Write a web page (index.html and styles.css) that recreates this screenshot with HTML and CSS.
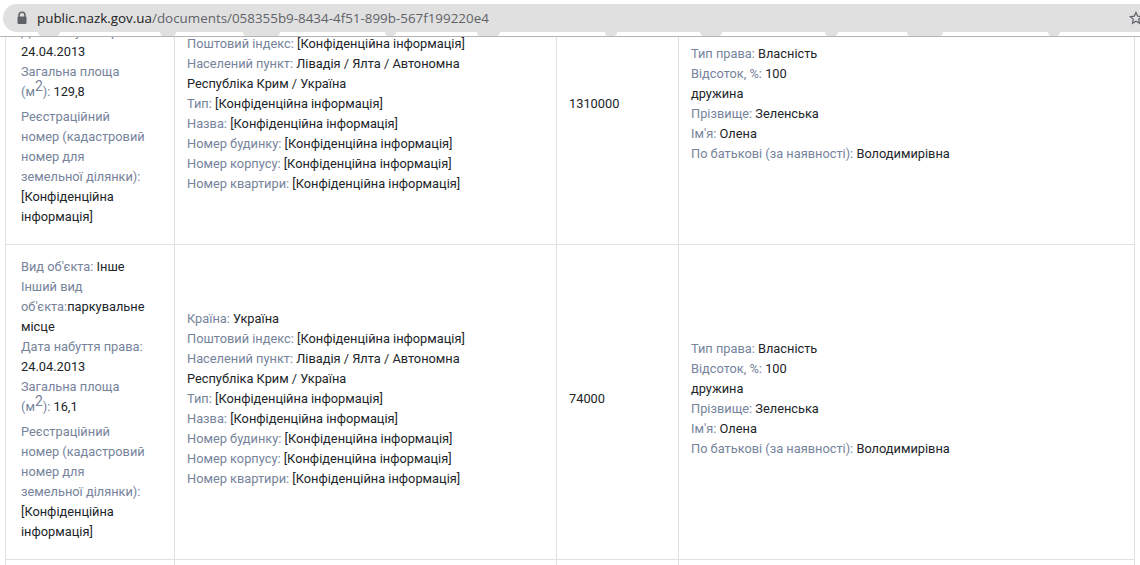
FILE: index.html
```html
<!DOCTYPE html>
<html lang="uk">
<head>
<meta charset="utf-8">
<title>public.nazk.gov.ua</title>
<link rel="stylesheet" href="styles.css">
</head>
<body>
<header class="toolbar">
  <div class="omnibox">
    <svg class="lock" width="12" height="14" viewBox="0 0 12 14"><path d="M3 6V4.2a3 3 0 0 1 6 0V6" fill="none" stroke="#5f6368" stroke-width="1.5"/><rect x="1.5" y="5.5" width="9" height="7.5" rx="1" fill="#5f6368"/></svg>
    <span class="url"><span class="host">public.nazk.gov.ua</span>/documents/058355b9-8434-4f51-899b-567f199220e4</span>
    <svg class="star" width="14" height="14" viewBox="0 0 14 14"><path d="M7 1.4l1.7 3.7 4 .5-3 2.7.8 4L7 10.3l-3.5 2 .8-4-3-2.7 4-.5z" fill="none" stroke="#5f6368" stroke-width="1.2"/></svg>
  </div>
  <i class="blob b1"></i><i class="blob b2"></i><i class="blob b3"></i><i class="blob b4"></i><i class="blob b5"></i><i class="blob b6"></i><i class="blob b7"></i><i class="blob b8"></i><i class="blob b9"></i><i class="blob b10"></i>
</header>
<main class="page">
<table class="docs">
  <colgroup><col class="c1"><col class="c2"><col class="c3"><col class="c4"></colgroup>
  <tr>
    <td class="first">
      <div><span class="k">Вид об'єкта:</span> Житловий будинок</div>
      <div><span class="k">Дата набуття права:</span> 24.04.2013</div>
      <div class="area"><span class="k">Загальна площа (м<sup>2</sup>):</span> 129,8</div>
      <div><span class="k">Реєстраційний номер (кадастровий номер для земельної ділянки):</span> [Конфіденційна інформація]</div>
    </td>
    <td>
      <div><span class="k">Країна:</span> Україна</div>
      <div><span class="k">Поштовий індекс:</span> [Конфіденційна інформація]</div>
      <div><span class="k">Населений пункт:</span> Лівадія / Ялта / Автономна Республіка Крим / Україна</div>
      <div><span class="k">Тип:</span> [Конфіденційна інформація]</div>
      <div><span class="k">Назва:</span> [Конфіденційна інформація]</div>
      <div><span class="k">Номер будинку:</span> [Конфіденційна інформація]</div>
      <div><span class="k">Номер корпусу:</span> [Конфіденційна інформація]</div>
      <div><span class="k">Номер квартири:</span> [Конфіденційна інформація]</div>
    </td>
    <td>1310000</td>
    <td>
      <div><span class="k">Тип права:</span> Власність</div>
      <div><span class="k">Відсоток, %:</span> 100</div>
      <div>дружина</div>
      <div><span class="k">Прізвище:</span> Зеленська</div>
      <div><span class="k">Ім'я:</span> Олена</div>
      <div><span class="k">По батькові (за наявності):</span> Володимирівна</div>
    </td>
  </tr>
  <tr>
    <td class="first">
      <div><span class="k">Вид об'єкта:</span> Інше</div>
      <div><span class="k">Інший вид об'єкта:</span>паркувальне місце</div>
      <div><span class="k">Дата набуття права:</span> 24.04.2013</div>
      <div class="area"><span class="k">Загальна площа (м<sup>2</sup>):</span> 16,1</div>
      <div><span class="k">Реєстраційний номер (кадастровий номер для земельної ділянки):</span> [Конфіденційна інформація]</div>
    </td>
    <td>
      <div><span class="k">Країна:</span> Україна</div>
      <div><span class="k">Поштовий індекс:</span> [Конфіденційна інформація]</div>
      <div><span class="k">Населений пункт:</span> Лівадія / Ялта / Автономна Республіка Крим / Україна</div>
      <div><span class="k">Тип:</span> [Конфіденційна інформація]</div>
      <div><span class="k">Назва:</span> [Конфіденційна інформація]</div>
      <div><span class="k">Номер будинку:</span> [Конфіденційна інформація]</div>
      <div><span class="k">Номер корпусу:</span> [Конфіденційна інформація]</div>
      <div><span class="k">Номер квартири:</span> [Конфіденційна інформація]</div>
    </td>
    <td>74000</td>
    <td>
      <div><span class="k">Тип права:</span> Власність</div>
      <div><span class="k">Відсоток, %:</span> 100</div>
      <div>дружина</div>
      <div><span class="k">Прізвище:</span> Зеленська</div>
      <div><span class="k">Ім'я:</span> Олена</div>
      <div><span class="k">По батькові (за наявності):</span> Володимирівна</div>
    </td>
  </tr>
  <tr class="next">
    <td class="first"></td><td></td><td></td><td></td>
  </tr>
</table>
</main>
</body>
</html>
```
FILE: styles.css
```css
* { box-sizing: border-box; }
html, body { margin: 0; height: 100%; }
body {
  position: relative;
  width: 1140px;
  height: 565px;
  overflow: hidden;
  background: #fff;
  font-family: Roboto, "Liberation Sans", sans-serif;
  font-size: 12.8px;
  line-height: 20px;
  color: #212529;
}
.toolbar {
  position: absolute;
  inset: 0 0 auto 0;
  height: 37px;
  padding-top: 4px;
  background: #fff;
  border-bottom: 1px solid #b4b4b4;
  z-index: 2;
}
.omnibox {
  display: flex;
  align-items: center;
  height: 28px;
  margin-left: 3px;
  padding-left: 13px;
  background: #e0e0e0;
  border-radius: 14px 0 0 14px;
}
.lock { flex: none; margin-right: 9px; }
.url {
  flex: 1;
  font-family: "Open Sans", Roboto, sans-serif;
  font-size: 13.4px;
  color: #5f6368;
}
.host { color: #202124; }
.star { flex: none; margin-right: -3px; }
.blob {
  position: absolute;
  top: 32px;
  height: 4px;
  background: #e0e0e0;
  border-radius: 0 0 10px 10px;
}
.b1 { left: 38px; width: 22px; }
.b2 { left: 160px; width: 16px; }
.b3 { left: 243px; width: 37px; }
.b4 { left: 385px; width: 11px; }
.b5 { left: 477px; width: 23px; }
.b6 { left: 605px; width: 12px; }
.b7 { left: 700px; width: 22px; }
.b8 { left: 825px; width: 13px; }
.b9 { left: 907px; width: 36px; }
.b10 { left: 1048px; width: 12px; }
.page {
  margin-top: -31px;
  padding-left: 5px;
}
.docs {
  width: 1130px;
  table-layout: fixed;
  border-collapse: collapse;
}
.c1 { width: 169px; }
.c2 { width: 382px; }
.c3 { width: 122px; }
.docs td {
  padding: 12px 28px 18px 12px;
  border: 1px solid #dee2e6;
  vertical-align: middle;
}
.docs td.first { padding-left: 15px; padding-bottom: 17px; }
.next td { height: 40px; }
.area { margin-bottom: 5px; }
.k { color: #76839b; }
sup { font-size: 14px; line-height: 0; }
```
